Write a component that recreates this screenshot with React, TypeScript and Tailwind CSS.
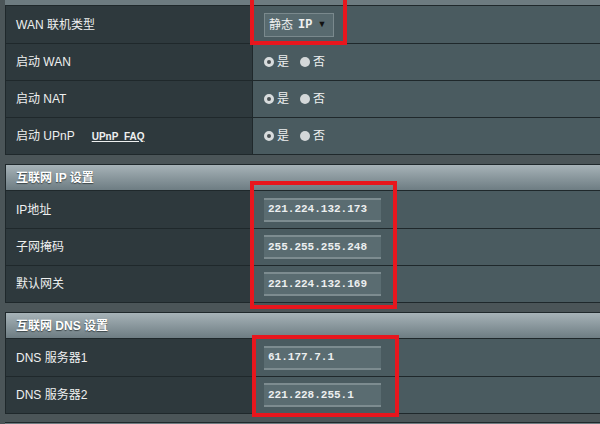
import React from "react";

const FONT = { fontFamily: '"Liberation Sans", Arial, "Noto Sans CJK SC", sans-serif' };
const MONO = { fontFamily: '"Liberation Mono", "Courier New", monospace' };

function Radio({ checked }: { checked: boolean }) {
  return (
    <span
      className={`inline-block w-[10px] h-[10px] rounded-full ${
        checked ? "bg-[#4a5154] border-[3px] border-[#d8dcdd]" : "bg-[#d4d8d9]"
      }`}
    />
  );
}

function YesNo() {
  return (
    <div className="flex items-center gap-[3px] text-[12px] text-[#eef0f0]">
      <Radio checked />
      <span className="mr-[8px]">是</span>
      <Radio checked={false} />
      <span>否</span>
    </div>
  );
}

function IpBox({ value }: { value: string }) {
  return (
    <div className="w-[117px] h-[24px] bg-[#5a6c71] border-t-2 border-t-[#7d8c90] border-b-2 border-b-[#7d8c90] flex items-center pl-[4px]">
      <span className="text-[11px] font-bold text-[#eceff0]" style={MONO}>
        {value}
      </span>
    </div>
  );
}

function Row({ label, children, first }: { label: React.ReactNode; children: React.ReactNode; first?: boolean }) {
  return (
    <div className={`flex h-[37px] ${first ? "" : "border-t border-[#1f282b]"}`}>
      <div className="w-[247px] bg-[#2e393d] border-r border-[#1f282b] flex items-center pl-[10px] text-[12px] text-[#eef0f0]">
        {label}
      </div>
      <div className="flex-1 bg-[#4a5b60] flex items-center pl-[11px]">{children}</div>
    </div>
  );
}

function Header({ title }: { title: string }) {
  return (
    <div className="h-[26px] bg-gradient-to-b from-[#a7b3b8] to-[#6e7d83] flex items-center pl-[10px] border-b border-[#1f282b]">
      <span className="text-[12px] font-bold text-white [text-shadow:0_1px_1px_#3b4548]">{title}</span>
    </div>
  );
}

export default function App() {
  return (
    <div className="w-[600px] h-[424px] overflow-hidden bg-[#4b5558] relative" style={FONT}>
      <div className="w-[660px] pl-[5px]">
        <div className="h-[5px] bg-[#6d7b80]" />
        <div className="border-y border-l border-[#1f282b]">
          <Row label="WAN 联机类型" first>
            <div className="w-[70px] h-[24px] bg-[#586a6f] border border-[#7a898d] flex items-center pl-[4px] gap-[5px] text-[#eef0f0]">
              <span className="text-[12px]">静态</span>
              <span className="text-[12px] font-bold" style={MONO}>
                IP
              </span>
              <span className="text-[9px] text-[#111]">▼</span>
            </div>
          </Row>
          <Row label="启动 WAN">
            <YesNo />
          </Row>
          <Row label="启动 NAT">
            <YesNo />
          </Row>
          <Row
            label={
              <>
                <span>启动 UPnP</span>
                <span className="ml-[17px] text-[10px] font-bold underline">UPnP&nbsp;&nbsp;FAQ</span>
              </>
            }
          >
            <YesNo />
          </Row>
        </div>

        <div className="mt-[9px] border-y border-l border-[#1f282b]">
          <Header title="互联网 IP 设置" />
          <Row label="IP地址" first>
            <IpBox value="221.224.132.173" />
          </Row>
          <Row label="子网掩码">
            <IpBox value="255.255.255.248" />
          </Row>
          <Row label="默认网关">
            <IpBox value="221.224.132.169" />
          </Row>
        </div>

        <div className="mt-[9px] border-y border-l border-[#1f282b]">
          <Header title="互联网 DNS 设置" />
          <Row label="DNS 服务器1" first>
            <IpBox value="61.177.7.1" />
          </Row>
          <Row label="DNS 服务器2">
            <IpBox value="221.228.255.1" />
          </Row>
        </div>

        <div className="mt-[8px] h-[10px] bg-[#6d7b80] border-t border-[#1f282b]" />
      </div>

      {/* red annotation boxes */}
      <div className="absolute left-[250px] top-[-6px] w-[97px] h-[51px] border-[4px] border-[#e8161d]" />
      <div className="absolute left-[250px] top-[181px] w-[147px] h-[128px] border-[4px] border-[#e8161d]" />
      <div className="absolute left-[252px] top-[335px] w-[147px] h-[82px] border-[4px] border-[#e8161d]" />
    </div>
  );
}
